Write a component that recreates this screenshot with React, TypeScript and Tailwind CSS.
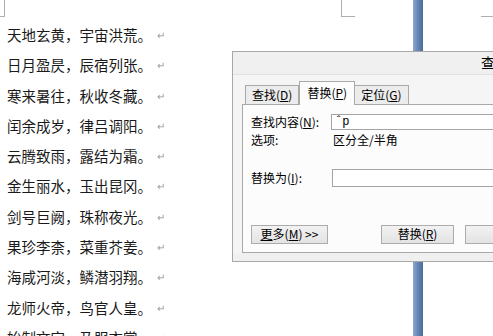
const lines = [
  "天地玄黄，宇宙洪荒。",
  "日月盈昃，辰宿列张。",
  "寒来暑往，秋收冬藏。",
  "闰余成岁，律吕调阳。",
  "云腾致雨，露结为霜。",
  "金生丽水，玉出昆冈。",
  "剑号巨阙，珠称夜光。",
  "果珍李柰，菜重芥姜。",
  "海咸河淡，鳞潜羽翔。",
  "龙师火帝，鸟官人皇。",
  "始制文字，乃服衣裳。",
];

const cjk = "font-['SimSun','Noto_Sans_CJK_SC',sans-serif]";

const Tab = ({ label, k, active }: { label: string; k: string; active?: boolean }) => (
  <div
    className={
      active
        ? "relative z-10 -mb-px flex h-[24px] items-start justify-center border border-b-0 border-[#a9a9a9] bg-[#fcfcfc] px-[7px] pt-[2px]"
        : "flex h-[19px] items-center justify-center border border-b-0 border-[#a9a9a9] bg-[#ececec] px-[6px] -ml-px first:ml-0"
    }
  >
    {label}(<u>{k}</u>)
  </div>
);

const Button = ({ children, w }: { children: React.ReactNode; w: string }) => (
  <div
    className={`flex h-[19px] shrink-0 items-center justify-center whitespace-nowrap border border-[#acacac] bg-linear-to-b from-[#f2f2f2] to-[#e3e3e3] ${w}`}
  >
    {children}
  </div>
);

export default function App() {
  return (
    <div className={`relative h-[336px] w-[493px] overflow-hidden bg-white ${cjk}`}>
      {/* page corner marks */}
      <div className="absolute left-0 top-0 h-[17px] w-[5px] border-b border-r border-[#b0b0b0]" />
      <div className="absolute left-[341px] top-0 h-[17px] w-[14px] border-b border-l border-[#b0b0b0]" />
      <div className="absolute left-[481px] top-[16px] h-px w-[12px] bg-[#b0b0b0]" />

      {/* page separator */}
      <div className="absolute left-[413px] top-0 h-[336px] w-[10px] bg-linear-to-r from-[#8ba7cf] via-[#6485b6] to-[#4c6b9b]" />

      {/* document text */}
      <div className="flex flex-col pl-[7px] pt-[20px] text-[14.5px] leading-[30.3px] text-[#1a1a1a]">
        {lines.map((l) => (
          <div key={l} className="flex items-center whitespace-nowrap">
            {l}
            <span className="ml-[5px] text-[10px] text-[#9a9a9a]">↵</span>
          </div>
        ))}
      </div>

      {/* find & replace dialog */}
      <div className="absolute left-[232px] top-[51px] flex h-[211px] w-[300px] flex-col border border-[#a8a8a8] bg-[#f0f0f0] text-[12px] text-black">
        <div className="flex h-[24px] items-center whitespace-nowrap border-b border-[#e2e2e2] pl-[248px] text-[14px]">
          查找和替换
        </div>
        <div className="flex flex-1 flex-col bg-[#f5f5f5] pl-[9px]">
          <div className="flex h-[29px] items-end pl-[3px]">
            <Tab label="查找" k="D" />
            <Tab label="替换" k="P" active />
            <Tab label="定位" k="G" />
          </div>
          <div className="flex h-[149px] flex-col border border-[#a9a9a9] bg-[#fcfcfc] pl-[8px] pt-[9px]">
            <div className="flex h-[16px] items-center">
              <div className="w-[80px] shrink-0">查找内容(<u>N</u>):</div>
              <div className="flex h-[16px] flex-1 items-center border border-[#a5a5a5] bg-white pl-[3px] font-['Liberation_Mono',monospace] text-[12px]">
                ˆp
              </div>
            </div>
            <div className="mt-[2px] flex h-[16px] items-center">
              <div className="w-[82px] shrink-0">选项:</div>
              <div>区分全/半角</div>
            </div>
            <div className="mt-[21px] flex h-[18px] items-center">
              <div className="w-[81px] shrink-0">替换为(<u>I</u>):</div>
              <div className="h-[18px] flex-1 border border-[#a5a5a5] bg-white" />
            </div>
            <div className="mt-[38px] flex items-center">
              <Button w="w-[77px]">
                <u>更</u>多(<u>M</u>)&nbsp;&gt;&gt;
              </Button>
              <div className="w-[53px] shrink-0" />
              <Button w="w-[73px]">替换(<u>R</u>)</Button>
              <div className="w-[11px] shrink-0" />
              <Button w="w-[100px] !justify-start pl-[32px]">全部替换(<u>A</u>)</Button>
            </div>
          </div>
        </div>
        <div className="h-[9px] bg-[#f0f0f0]" />
      </div>
    </div>
  );
}
